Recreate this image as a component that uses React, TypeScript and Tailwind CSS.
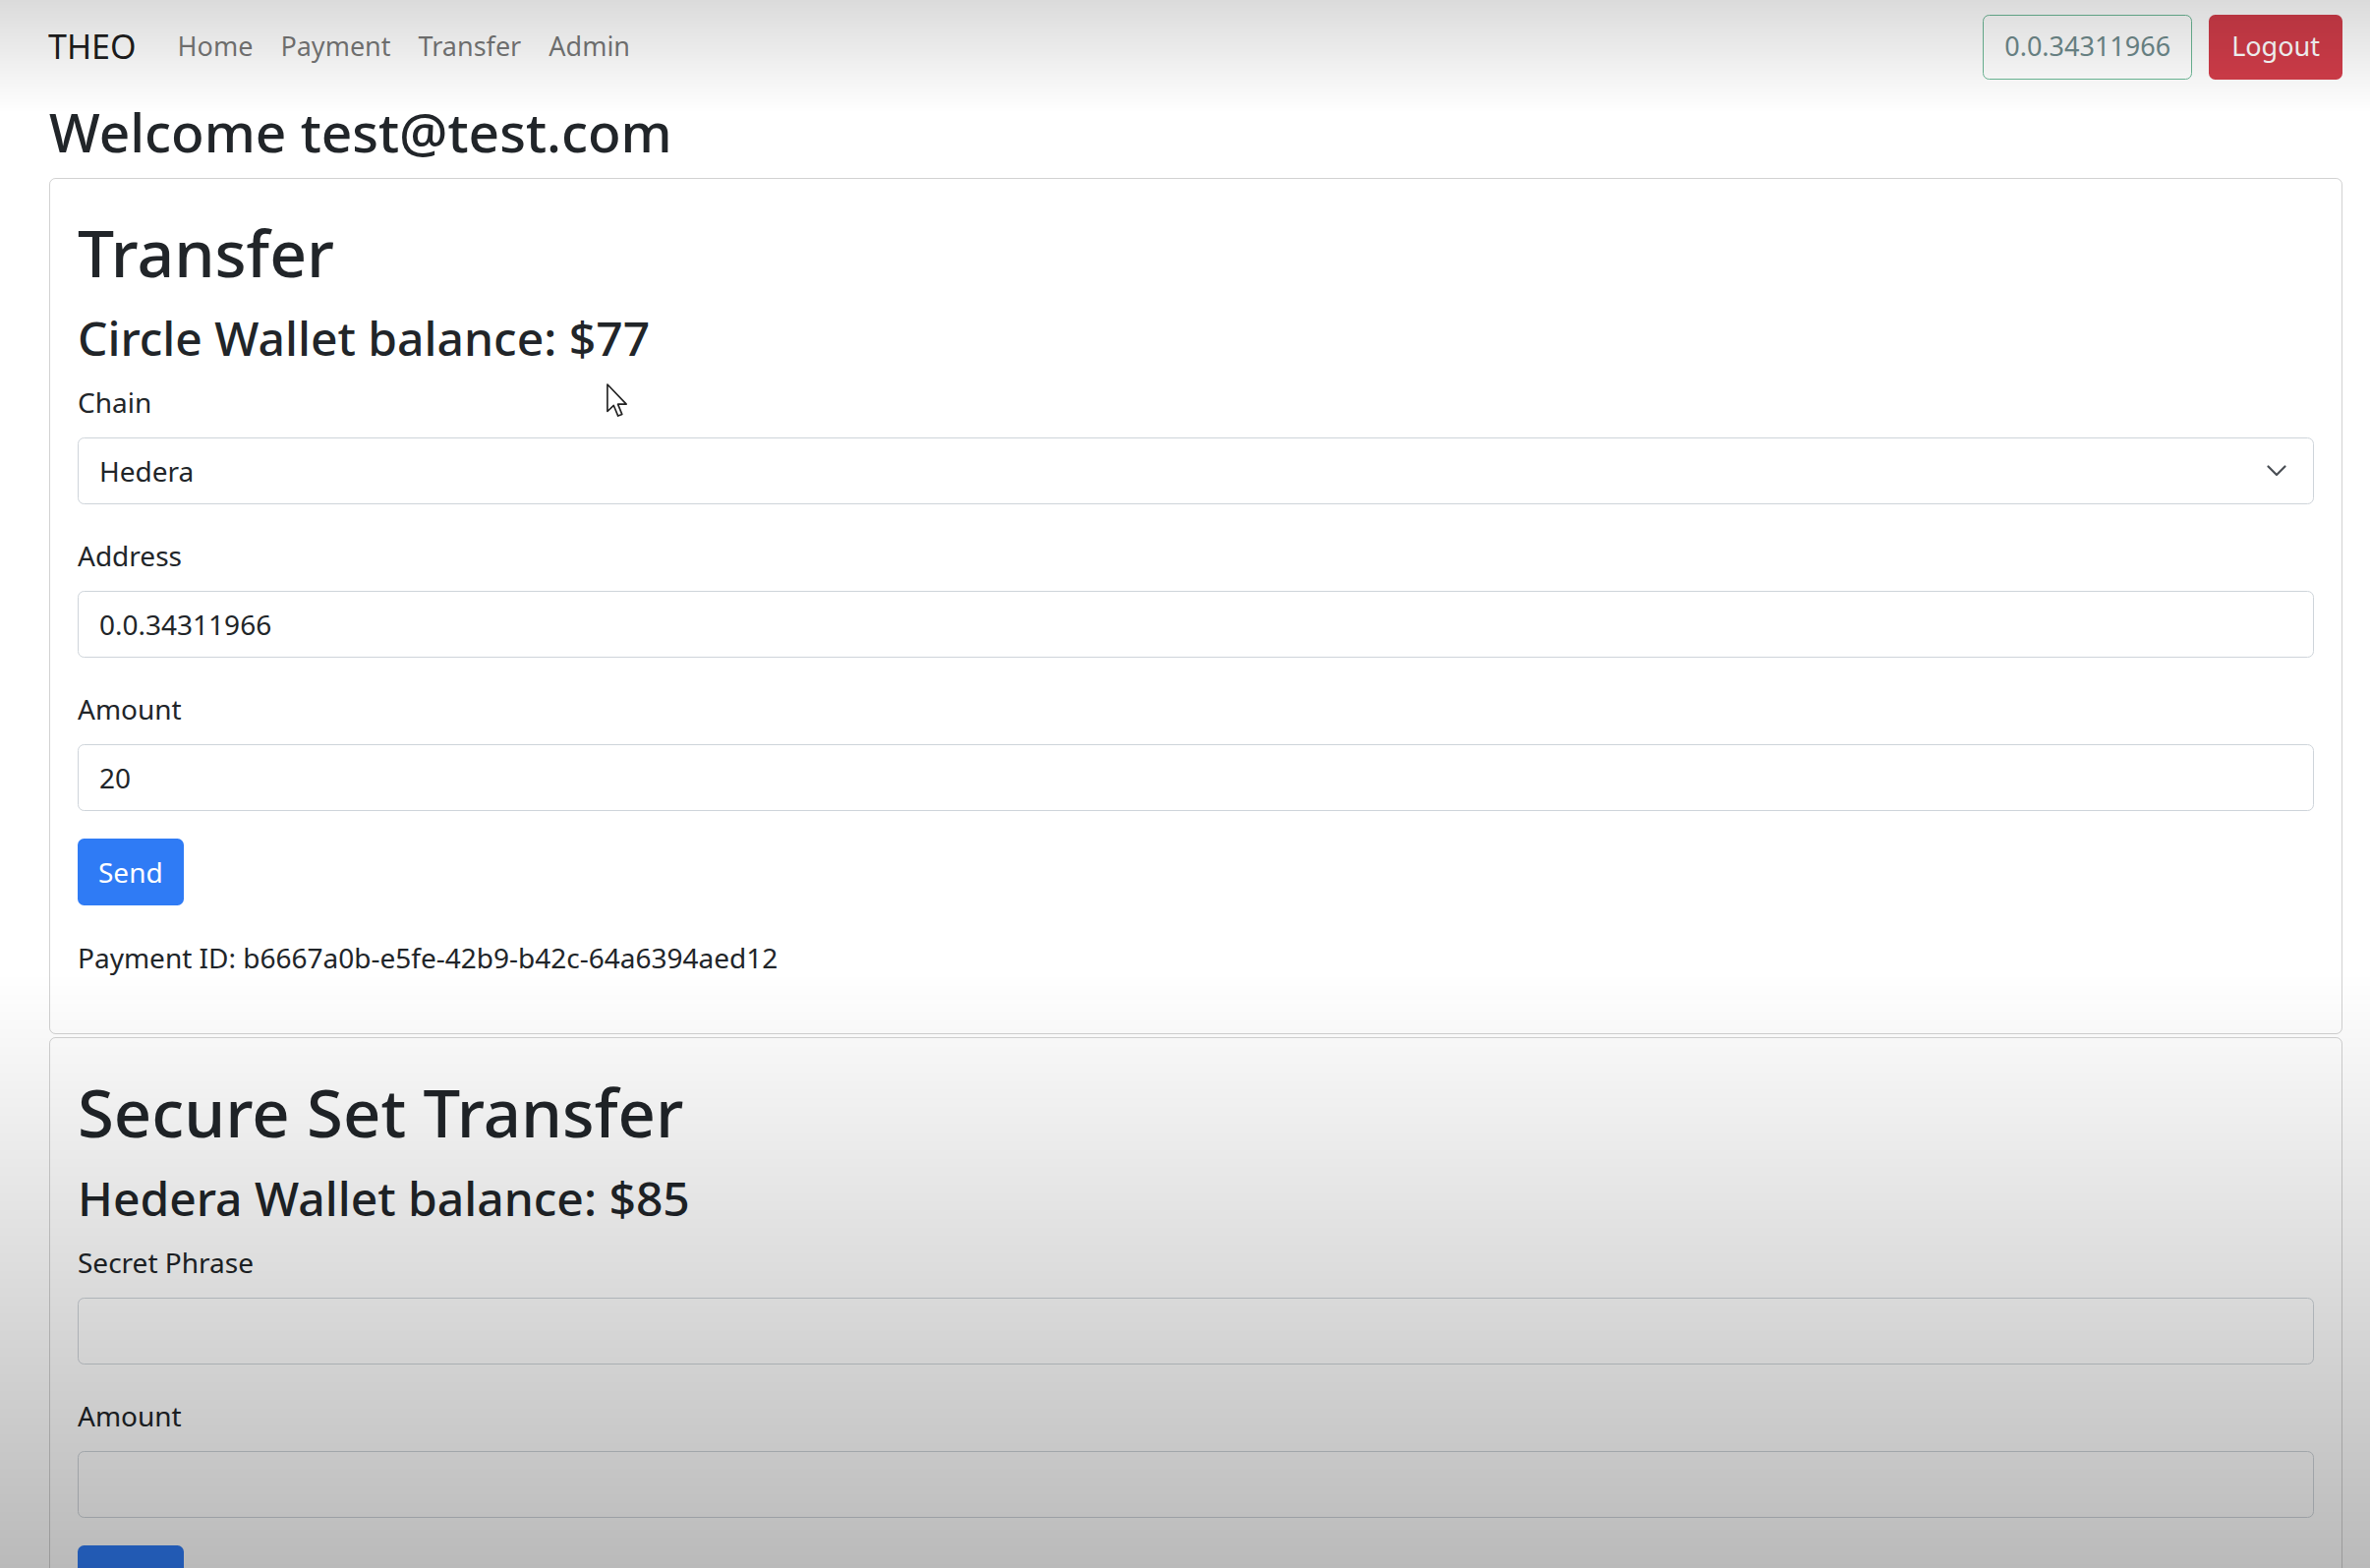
import React, { useState } from 'react';

const NAV_LINKS = ['Home', 'Payment', 'Transfer', 'Admin'];

const Field: React.FC<{ label: string; last?: boolean; children: React.ReactNode }> = ({ label, last, children }) => (
  <div className={last ? 'mb-[28px]' : 'mb-[31px]'}>
    <label className="block mb-[15px] text-[28px] leading-[1.5] text-[#212529]">{label}</label>
    {children}
  </div>
);

const TextInput: React.FC<{ value: string; onChange?: (v: string) => void }> = ({ value, onChange }) => (
  <input
    value={value}
    onChange={(e) => onChange && onChange(e.target.value)}
    className="block w-full h-[68px] px-[21px] border border-[#ced4da] rounded-[6.5px] bg-white text-[28px] text-[#212529] outline-none"
  />
);

const ChevronDown = () => (
  <svg viewBox="0 0 20 12" className="w-[20px] h-[12px]" fill="none" stroke="#4a4f55" strokeWidth="2.2" strokeLinecap="round" strokeLinejoin="round">
    <path d="M1.5 1.5 10 10l8.5-8.5" />
  </svg>
);

const Cursor = () => (
  <svg viewBox="0 0 12 19" className="w-[22px] h-[35px]">
    <path d="M0.5 0.5 L0.5 15.5 L4 12.2 L6.4 18 L8.6 17.1 L6.3 11.5 L11 11.5 Z" fill="#fff" stroke="#222" strokeWidth="0.9" strokeLinejoin="round" />
  </svg>
);

export default function App() {
  const [chain] = useState('Hedera');
  const [address, setAddress] = useState('0.0.34311966');
  const [amount, setAmount] = useState('20');
  const [secret, setSecret] = useState('');
  const [secureAmount, setSecureAmount] = useState('');

  return (
    <div className="relative min-h-screen bg-white text-[#212529] font-['Noto_Sans','Open_Sans',sans-serif]">
      {/* Navbar */}
      <nav className="flex items-center justify-between h-[95px] pl-[49px] pr-[28px]">
        <div className="flex items-center">
          <span className="mr-[28px] text-[34px] text-black/90">THEO</span>
          {NAV_LINKS.map((link) => (
            <a key={link} className="px-[14px] text-[27px] text-black/55 cursor-pointer">
              {link}
            </a>
          ))}
        </div>
        <div className="flex items-center gap-[17px]">
          <button className="h-[66px] px-[21px] border border-[#6cb896] rounded-[6.5px] text-[27px] text-[#6f8a8c]">
            0.0.34311966
          </button>
          <button className="h-[66px] px-[23px] rounded-[6.5px] bg-[#d23d4a] text-[27px] text-white">
            Logout
          </button>
        </div>
      </nav>

      <main className="pl-[50px] pr-[28px]">
        <h2 className="mt-[6px] mb-[14px] text-[55px] leading-[1.2] font-medium">Welcome test@test.com</h2>

        {/* Transfer card */}
        <div className="border border-black/[0.175] rounded-[6.5px] px-[28px] pt-[35px] pb-[28px]">
          <h1 className="mb-[19px] text-[66px] leading-[1.2] font-medium">Transfer</h1>
          <h3 className="mb-[15px] text-[48px] leading-[1.2] font-medium">Circle Wallet balance: $77</h3>
          <Field label="Chain">
            <div className="flex items-center justify-between h-[68px] pl-[21px] pr-[27px] border border-[#ced4da] rounded-[6.5px] bg-white text-[28px]">
              <span>{chain}</span>
              <ChevronDown />
            </div>
          </Field>
          <Field label="Address">
            <TextInput value={address} onChange={setAddress} />
          </Field>
          <Field label="Amount" last>
            <TextInput value={amount} onChange={setAmount} />
          </Field>
          <button className="h-[68px] px-[21px] rounded-[6.5px] bg-[#2f7bf5] text-[28px] text-white">Send</button>
          <p className="mt-[32px] mb-[28px] text-[28px] leading-[1.5]">Payment ID: b6667a0b-e5fe-42b9-b42c-64a6394aed12</p>
        </div>

        {/* Secure Set Transfer card */}
        <div className="mt-[3px] border border-black/[0.175] rounded-[6.5px] px-[28px] pt-[35px] pb-[28px]">
          <h1 className="mb-[19px] text-[67px] leading-[1.2] font-medium">Secure Set Transfer</h1>
          <h3 className="mb-[15px] text-[48px] leading-[1.2] font-medium">Hedera Wallet balance: $85</h3>
          <Field label="Secret Phrase">
            <TextInput value={secret} onChange={setSecret} />
          </Field>
          <Field label="Amount" last>
            <TextInput value={secureAmount} onChange={setSecureAmount} />
          </Field>
          <button className="h-[68px] px-[21px] rounded-[6.5px] bg-[#2f7bf5] text-[28px] text-white">Send</button>
        </div>
      </main>

      {/* mouse pointer */}
      <div className="absolute left-[617px] top-[390px] pointer-events-none">
        <Cursor />
      </div>

      {/* video fade overlay */}
      <div className="fixed inset-0 pointer-events-none bg-[linear-gradient(to_bottom,rgba(0,0,0,0.14)_0px,rgba(0,0,0,0)_115px,rgba(0,0,0,0)_990px,rgba(0,0,0,0.27)_1595px)]" />
    </div>
  );
}
